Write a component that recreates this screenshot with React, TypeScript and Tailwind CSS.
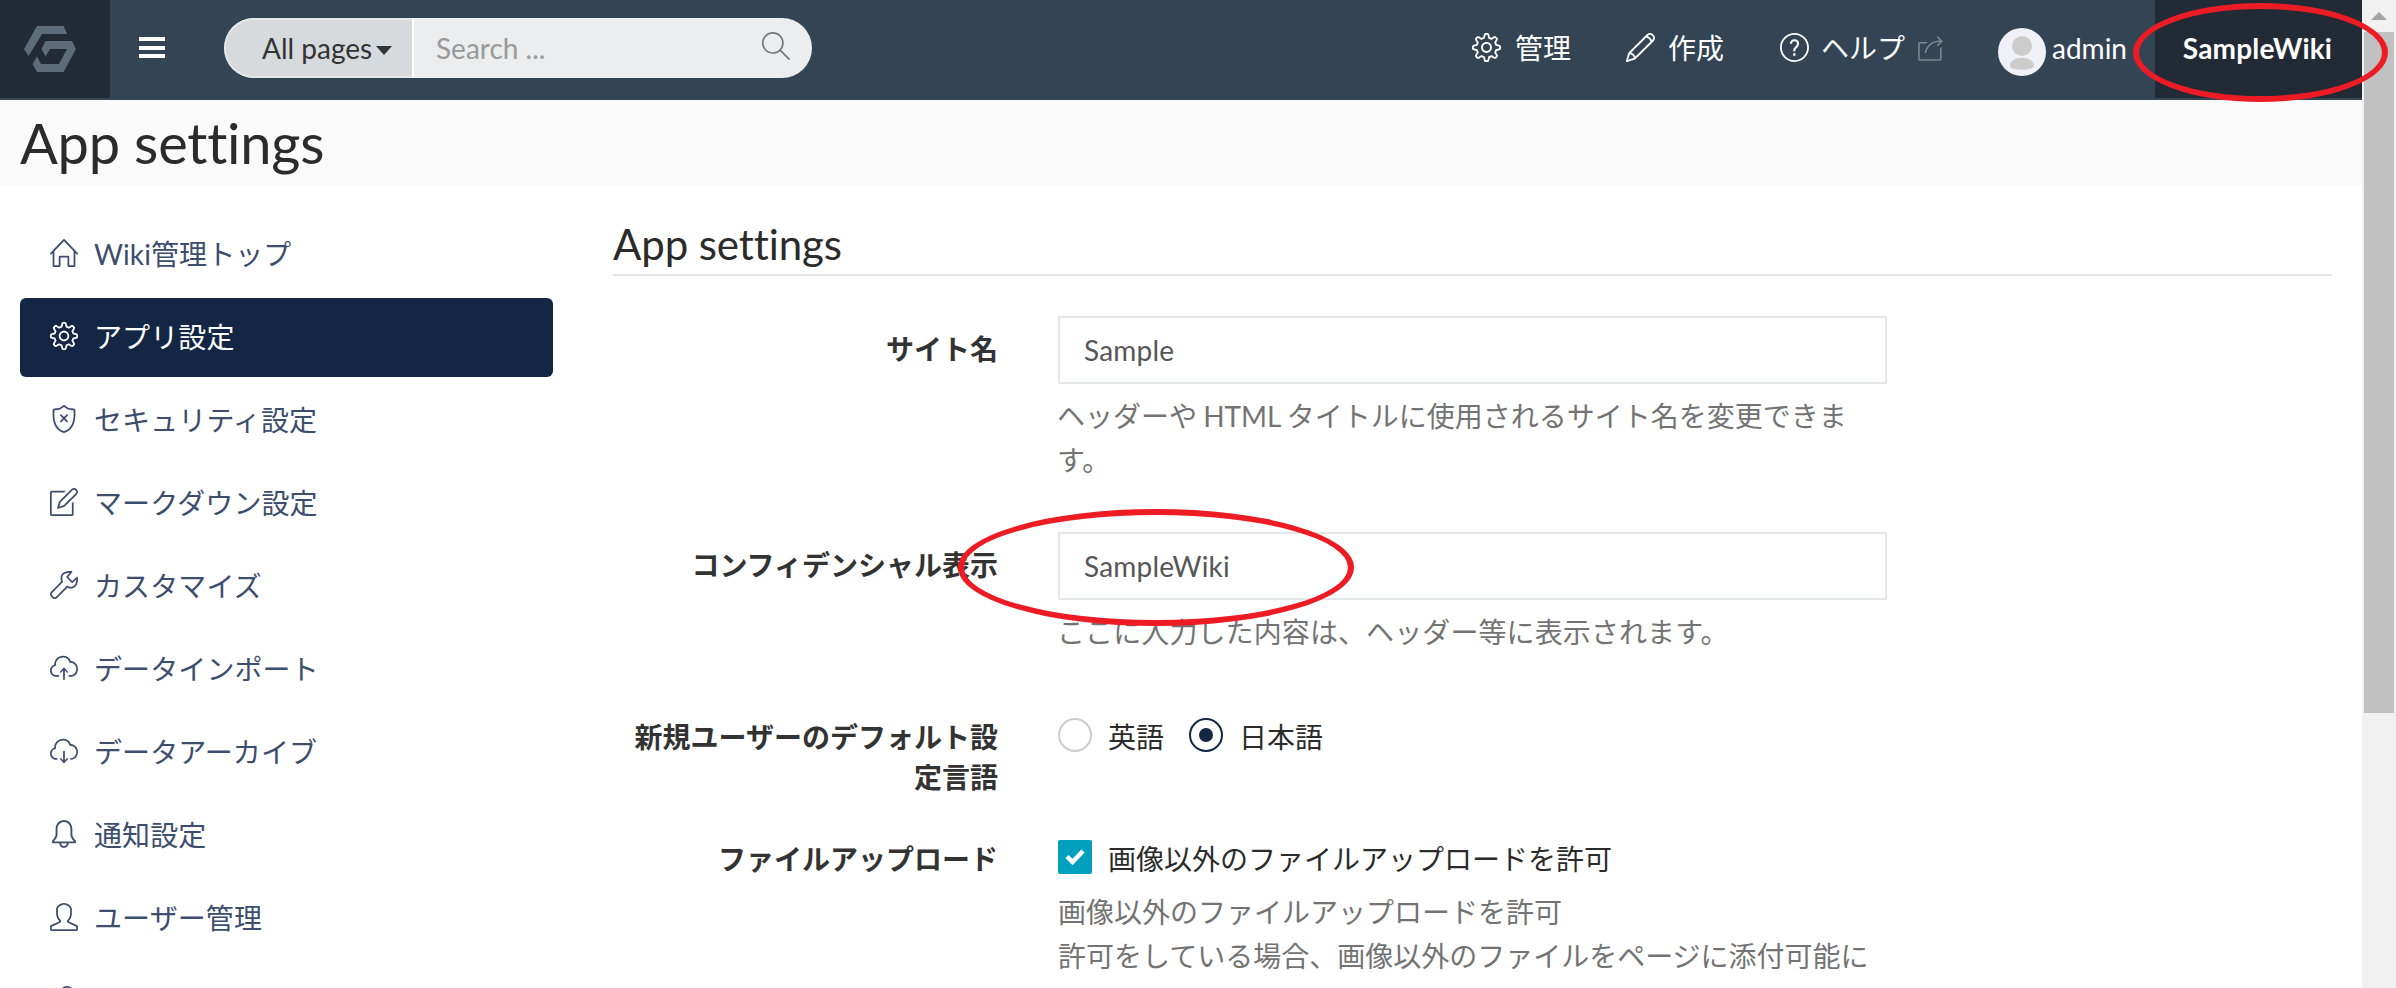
import type { ReactNode } from "react";
import type { IconType } from "react-icons";
import {
  SlHome, SlSettings, SlShield, SlNote, SlWrench, SlCloudUpload, SlCloudDownload,
  SlBell, SlUser, SlPeople, SlPencil, SlQuestion, SlShareAlt, SlMagnifier,
} from "react-icons/sl";

const menu: { icon: IconType; label: string; active?: boolean }[] = [
  { icon: SlHome, label: "Wiki管理トップ" },
  { icon: SlSettings, label: "アプリ設定", active: true },
  { icon: SlShield, label: "セキュリティ設定" },
  { icon: SlNote, label: "マークダウン設定" },
  { icon: SlWrench, label: "カスタマイズ" },
  { icon: SlCloudUpload, label: "データインポート" },
  { icon: SlCloudDownload, label: "データアーカイブ" },
  { icon: SlBell, label: "通知設定" },
  { icon: SlUser, label: "ユーザー管理" },
  { icon: SlPeople, label: "" },
];

function Logo() {
  return (
    <svg viewBox="24 25 52 46" className="h-[46px] w-[52px] fill-[#5d6c7b]">
      <path d="M37 25H63.500L67.300 33H42L28.500 55L24 48Z" />
      <path d="M45.500 40H72L76 48L63.500 71H37L32.500 63L37 55.500L41 63H59L67 48H50L45.500 55.500L41.500 48Z" />
    </svg>
  );
}

function Navbar() {
  return (
    <header className="flex h-[100px] shrink-0 items-start bg-[#334455] text-white">
      <div className="flex h-[98px] w-[110px] items-center justify-center bg-[#222b35] pr-[10px]">
        <Logo />
      </div>
      <div className="mt-[37px] ml-[29px] flex w-[26px] flex-col gap-[4.500px]">
        <span className="h-1 bg-white" />
        <span className="h-1 bg-white" />
        <span className="h-1 bg-white" />
      </div>
      <div className="mt-[18px] ml-[59px] flex h-[60px] w-[588px] overflow-hidden rounded-full bg-[#ebedee]">
        <div className="flex w-[190px] items-center rounded-l-full border-2 border-[#e4e7e7] border-r-white bg-[#d6dadd] pl-[36px] text-[#333]">
          All pages
          <span className="mt-[5px] ml-[4px] border-x-[8px] border-t-[9px] border-x-transparent border-t-[#333]" />
        </div>
        <div className="flex flex-1 items-center justify-between pr-[22px] pl-[22px] text-[#999]">
          Search ...
          <SlMagnifier className="mt-[-4px] size-[28px] text-[#777]" />
        </div>
      </div>
      <nav className="ml-auto flex h-[97px] items-center">
        <SlSettings className="mt-[-3px] size-[29px]" />
        <span className="mt-[-2px] ml-[14px]">管理</span>
        <SlPencil className="mt-[-3px] ml-[55px] size-[29px]" />
        <span className="mt-[-2px] ml-[13px]">作成</span>
        <SlQuestion className="mt-[-3px] ml-[56px] size-[29px]" />
        <span className="mt-[-2px] ml-[12px]">ヘルプ</span>
        <SlShareAlt className="ml-[13px] size-[25px] text-[#7b8894]" />
        <svg viewBox="0 0 48 48" className="mt-[7px] ml-[55px] size-[48px]">
          <circle cx="24" cy="24" r="24" fill="#f0f1f6" />
          <circle cx="24" cy="18" r="10" fill="#ccc" />
          <path d="M12 38c0-11 24-11 24 0c0 5-24 5-24 0Z" fill="#ccc" />
        </svg>
        <span className="mt-[-1px] ml-[6px] w-[103px]">admin</span>
      </nav>
      <div className="flex h-[98px] w-[207px] items-center justify-center bg-[#222b35] pr-[2px] pb-[2px] font-bold tracking-[0.200px]">
        SampleWiki
      </div>
    </header>
  );
}

function Field({ label, labelTop, height, children }: { label: string; labelTop: string; height: string; children: ReactNode }) {
  return (
    <div className={`flex ${height}`}>
      <div className={`w-[385px] shrink-0 text-right leading-[40px] font-bold text-[#333] ${labelTop}`}>{label}</div>
      <div className="ml-[60px] w-[829px]">{children}</div>
    </div>
  );
}

function TextInput({ value }: { value: string }) {
  return (
    <div className="flex h-[68px] items-center border-2 border-[#e4e7ea] px-[24px] tracking-[0.200px] text-[#565656]">{value}</div>
  );
}

function Radio({ label, checked }: { label: string; checked?: boolean }) {
  return (
    <div className="flex h-[40px] items-center">
      <span className={`flex size-[34px] items-center justify-center rounded-full border-2 ${checked ? "border-[#132744]" : "border-[#ccc]"}`}>
        {checked && <span className="size-[14px] rounded-full bg-[#132744]" />}
      </span>
      <span className="mt-[3px] mr-px ml-[16px]">{label}</span>
    </div>
  );
}

export default function App() {
  return (
    <div className="relative flex h-[988px] w-[2396px] overflow-hidden bg-white font-['Lato','Noto_Sans_CJK_JP',sans-serif] text-[28px] leading-[40px] text-[#2b2b2b] [font-variant-ligatures:none]">
      <div className="flex w-[2362px] flex-col">
        <Navbar />
        <h1 className="flex h-[85px] shrink-0 items-center bg-[#fafafa] pl-5 text-[56px] tracking-[-0.200px]">App settings</h1>
        <div className="flex">
          <aside className="mt-[30px] ml-5 flex w-[533px] shrink-0 flex-col gap-1">
            {menu.map(({ icon: Icon, label, active }, i) => (
              <div
                key={i}
                className={`flex h-[79px] shrink-0 items-center rounded-[6px] pl-[30px] ${active ? "bg-[#132744] text-white" : "text-[#3d4d6d]"}`}
              >
                <Icon className="mt-[-4px] size-[28px]" />
                <span className="mt-[-1px] ml-[16px] tracking-[0.100px]">{label}</span>
              </div>
            ))}
          </aside>
          <main className="ml-[60px] w-[1719px]">
            <h2 className="mt-[34px] h-[57px] border-b-2 border-[#e4e5e5] text-[42px] leading-[50px] tracking-[-0.100px]">App settings</h2>
            <div className="mt-[40px]">
              <Field label="サイト名" labelTop="pt-[13px]" height="h-[216px]">
                <TextInput value="Sample" />
                <p className="mt-[10px] ml-[-1px] leading-[44px] [word-spacing:-1px] text-[#737373]">
                  ヘッダーや HTML タイトルに使用されるサイト名を変更できます。
                </p>
              </Field>
              <Field label="コンフィデンシャル表示" labelTop="pt-[13px]" height="h-[183px]">
                <TextInput value="SampleWiki" />
                <p className="mt-[10px] ml-[-1px] leading-[44px] tracking-[0.100px] text-[#737373]">ここに入力した内容は、ヘッダー等に表示されます。</p>
              </Field>
              <Field label="新規ユーザーのデフォルト設定言語" labelTop="pt-[2px]" height="h-[122px]">
                <div className="flex gap-[24px]">
                  <Radio label="英語" />
                  <Radio label="日本語" checked />
                </div>
              </Field>
              <Field label="ファイルアップロード" labelTop="pt-[2px]" height="h-[160px]">
                <div className="flex h-[40px] items-center">
                  <span className="flex size-[34px] items-center justify-center rounded-[2px] bg-[#00a0be]">
                    <svg viewBox="0 0 20 16" className="h-[16px] w-[20px]" fill="none" stroke="white" strokeWidth="4.500">
                      <path d="M2 7.500L7.500 13L18 2" />
                    </svg>
                  </span>
                  <span className="mt-[3px] ml-[16px]">画像以外のファイルアップロードを許可</span>
                </div>
                <p className="mt-[13px] leading-[44px] text-[#737373]">
                  画像以外のファイルアップロードを許可
                  <br />
                  許可をしている場合、画像以外のファイルをページに添付可能に
                </p>
              </Field>
            </div>
          </main>
        </div>
      </div>
      <div className="flex w-[34px] flex-col items-center bg-[#f1f1f1]">
        <span className="mt-[12px] border-x-[8px] border-b-[8px] border-x-transparent border-b-[#a3a3a3]" />
        <span className="mt-[12px] h-[681px] w-[30px] bg-[#c1c1c1]" />
      </div>
      <div className="absolute top-[3px] left-[2133px] h-[99px] w-[255px] rounded-[50%] border-[6px] border-[#ed1c24]" />
      <div className="absolute top-[509px] left-[958px] h-[117px] w-[396px] rounded-[50%] border-[6px] border-[#ed1c24]" />
    </div>
  );
}
